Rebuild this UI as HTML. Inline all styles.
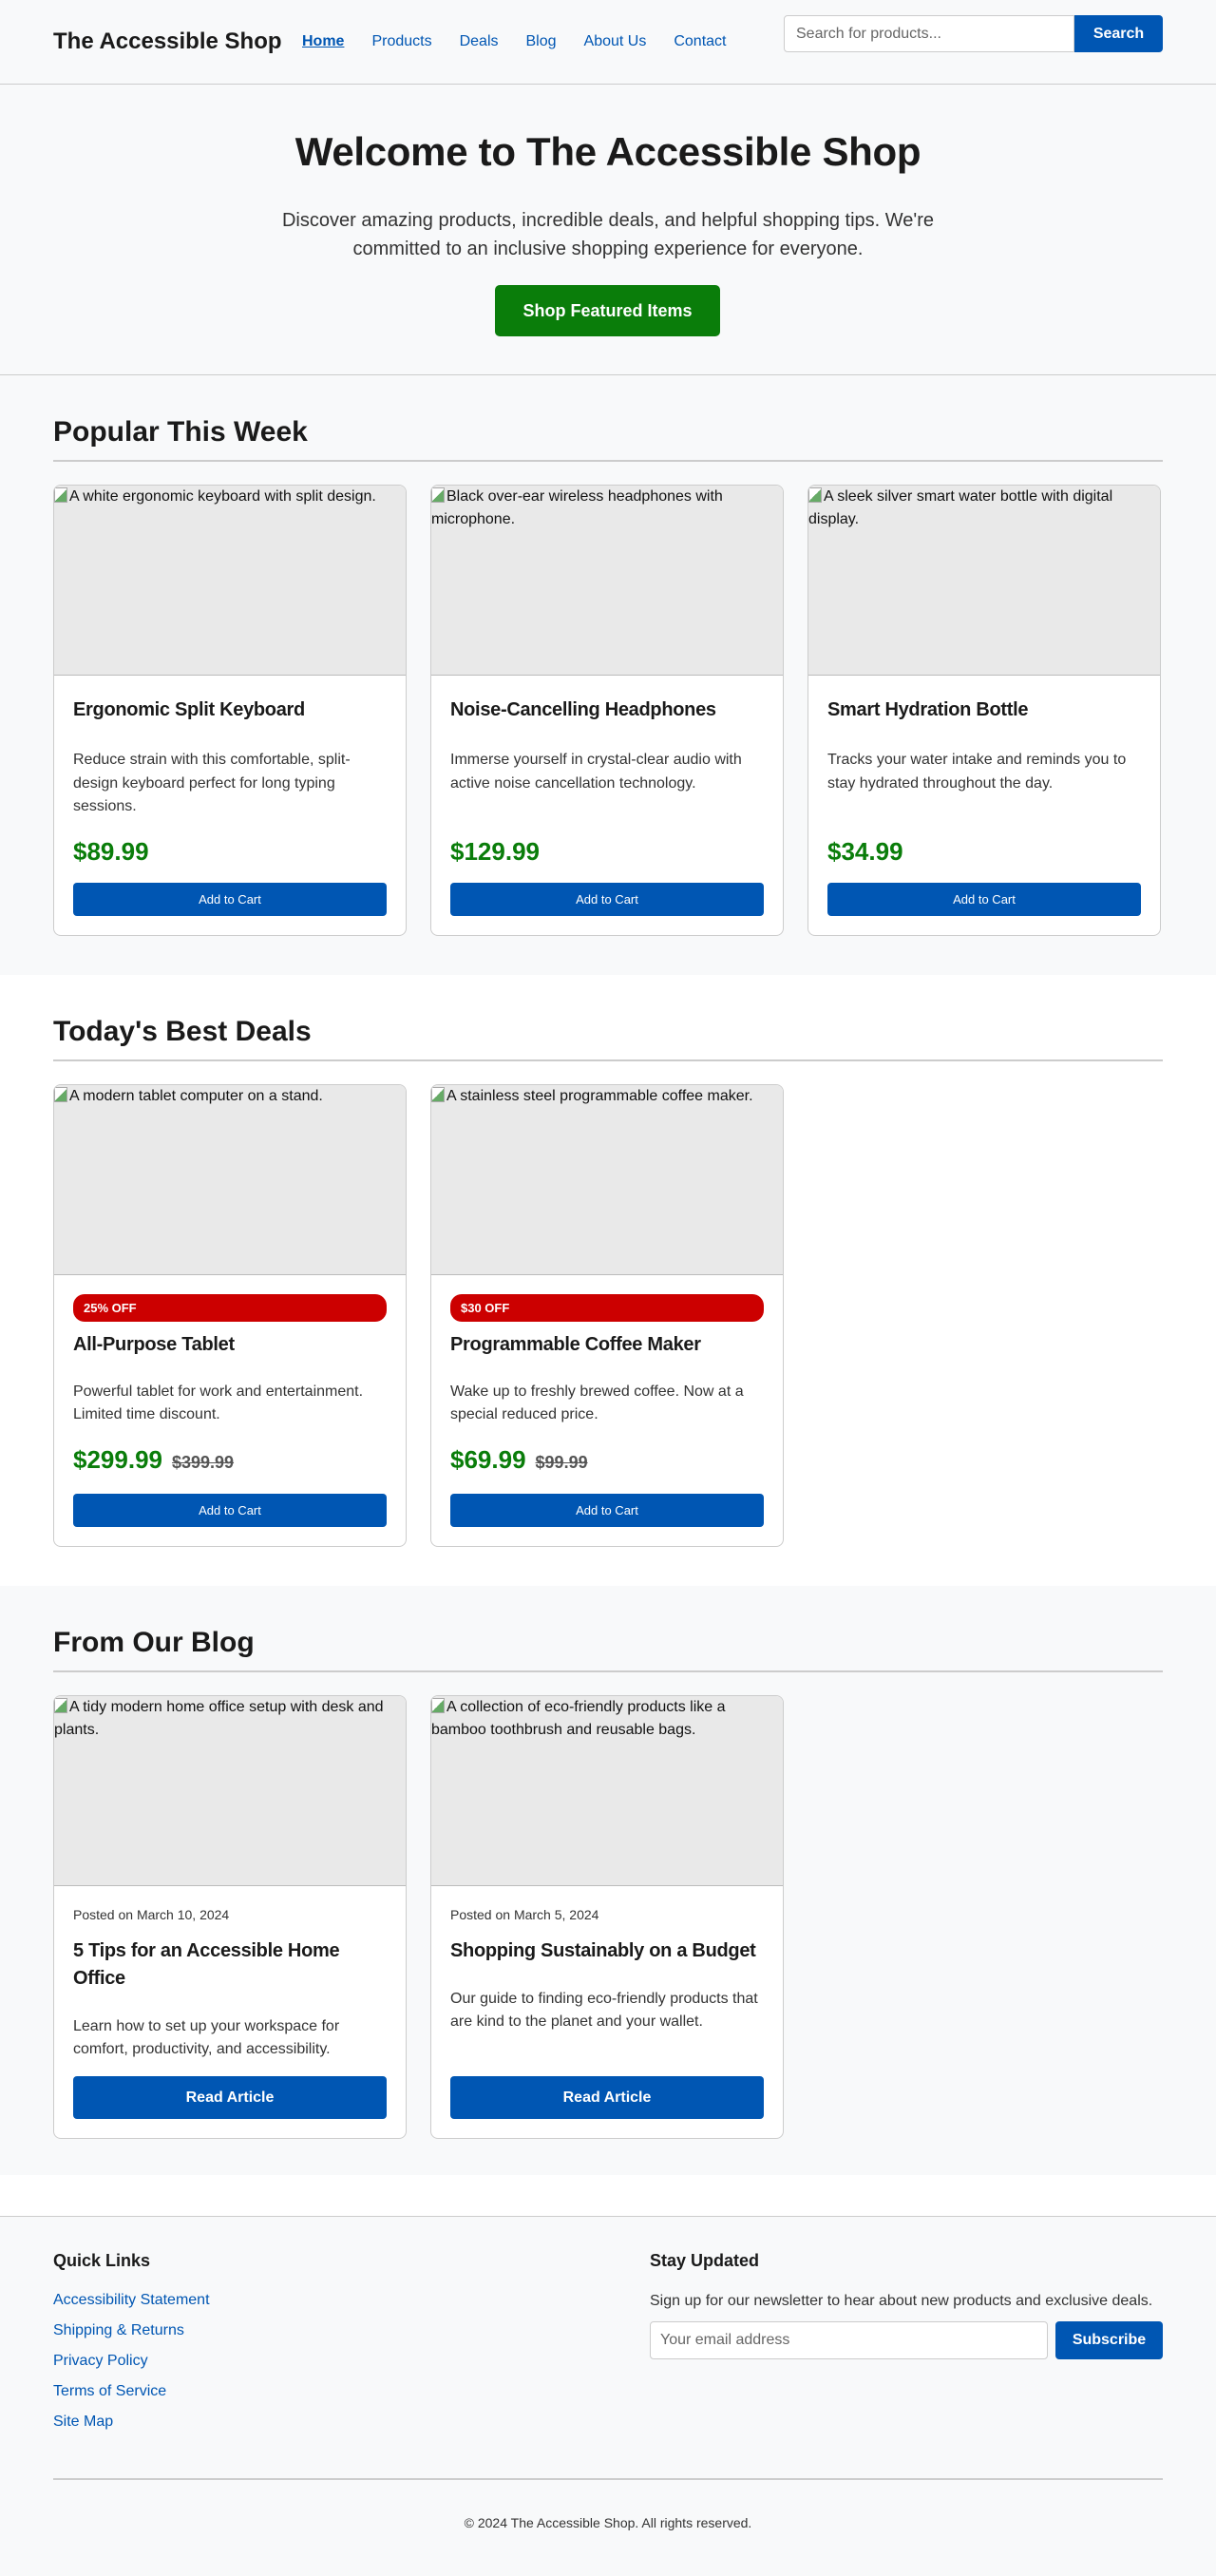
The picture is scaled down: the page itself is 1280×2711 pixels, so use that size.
<!DOCTYPE html>
<html><head><meta charset="utf-8"><style>
*{box-sizing:border-box;margin:0;padding:0}
body{width:1280px;font-family:"Liberation Sans",Arial,sans-serif;color:#1a1a1a;background:#fff}
a{color:#0056b3;text-decoration:none}
.wrap{width:1168px;margin:0 auto}
header{background:#f8f9fa;height:89px;border-bottom:1px solid #ccc;position:relative}
.logo{position:absolute;left:56px;top:29px;font-size:24px;font-weight:bold;line-height:30px}
nav{position:absolute;left:318px;top:34px;font-size:16px;line-height:20px}
nav a{margin-right:29px}
nav a.cur{font-weight:bold;text-decoration:underline}
.search{position:absolute;left:825px;top:16px;display:flex;height:39px}
.search input{width:306px;height:39px;border:1px solid #ccc;border-radius:4px 0 0 4px;padding:0 12px;font-size:16px;font-family:inherit;color:#666;background:#fff}
.search button{width:93px;background:#0056b3;color:#fff;border:0;border-radius:0 4px 4px 0;font-size:16px;font-weight:bold;font-family:inherit}
.hero{background:#f8f9fa;height:306px;border-bottom:1px solid #ccc;text-align:center;position:relative}
.hero h1{position:absolute;top:44px;left:0;right:0;font-size:42px;line-height:54px;letter-spacing:-0.3px}
.hero p{position:absolute;top:128px;left:290px;width:700px;font-size:20px;line-height:30px;color:#333}
.hero .btn{position:absolute;left:521px;top:211px;width:237px;height:54px;background:#0a7d0a;color:#fff;font-size:18px;font-weight:bold;line-height:54px;border-radius:5px}
section{padding:42px 0 41px}
section.light{background:#f8f9fa}
h2{font-size:30px;line-height:36px;padding-bottom:11px;border-bottom:2px solid #ccc;margin-bottom:24px}
.cards{display:flex;gap:25px;align-items:stretch}
.card{width:372px;border:1px solid #ccc;border-radius:8px;background:#fff;overflow:hidden;display:flex;flex-direction:column}
.img{height:200px;background:#e9e9e9;border-bottom:1px solid #bbb;font-size:16px;line-height:24px;color:#111}
.img i{display:inline-block;width:14px;height:16px;border:1px solid #aaa;vertical-align:-2px;background:linear-gradient(135deg,#fff 50%,#6a6 50%);margin-right:2px}
.body{padding:20px 20px 20px;display:flex;flex-direction:column;flex:1}
.body h3{font-size:20px;line-height:28px;margin-top:2px;letter-spacing:-0.3px}
.desc{font-size:16px;line-height:24.5px;color:#333;margin-top:27px;flex:1}
.price{font-size:26px;line-height:32px;font-weight:bold;color:#0a7d0a;margin-top:18px}
.price s{font-size:18px;color:#555;margin-left:10px}
.add{margin-top:17px;height:35px;background:#0056b3;color:#fff;border-radius:4px;text-align:center;font-size:13px;line-height:35px}
.badge{height:29px;background:#cc0000;color:#fff;font-size:13px;font-weight:bold;line-height:29px;padding-left:11px;border-radius:12px;margin-bottom:10px}
.deal h3{margin-top:0}
.deal .desc{margin-top:24px}
.posted{font-size:14px;line-height:20px;color:#333;margin-bottom:14px}
.blog h3{margin-top:0;line-height:29px}
.blog .desc{margin-top:24px}
.read{margin-top:15px;height:45px;background:#0056b3;color:#fff;border-radius:4px;text-align:center;font-size:16px;font-weight:bold;line-height:45px}
section.blogs{padding-bottom:38px}
footer{margin-top:43px;background:#f8f9fa;border-top:1px solid #ccc;height:379px;position:relative}
.fl{position:absolute;left:56px;top:34px}
.fl h4,.fr h4{font-size:18px;line-height:24px}
.fl a{display:block;font-size:16px;line-height:32px}
.fl h4{margin-bottom:14px}
.fr{position:absolute;left:684px;top:34px;width:540px}
.fr p{font-size:16px;line-height:24px;color:#333;margin-top:19px}
.fr .row{display:flex;margin-top:9px;gap:8px}
.fr input{width:419px;height:40px;border:1px solid #ccc;border-radius:4px;padding:0 10px;font-size:16px;font-family:inherit;color:#666;background:#fff}
.fr button{width:113px;height:40px;background:#0056b3;color:#fff;border:0;border-radius:4px;font-size:16px;font-weight:bold;font-family:inherit}
.hr{position:absolute;left:56px;width:1168px;top:275px;border-top:2px solid #ccc}
.copy{position:absolute;top:312px;left:0;right:0;text-align:center;font-size:14px;color:#333;line-height:20px}
</style></head><body>
<header>
<div class="logo">The Accessible Shop</div>
<nav><a class="cur">Home</a><a>Products</a><a>Deals</a><a>Blog</a><a>About Us</a><a>Contact</a></nav>
<div class="search"><input value="Search for products..."><button>Search</button></div>
</header>
<div class="hero">
<h1>Welcome to The Accessible Shop</h1>
<p>Discover amazing products, incredible deals, and helpful shopping tips. We're committed to an inclusive shopping experience for everyone.</p>
<a class="btn">Shop Featured Items</a>
</div>
<section class="light"><div class="wrap">
<h2>Popular This Week</h2>
<div class="cards">
<div class="card"><div class="img"><i></i>A white ergonomic keyboard with split design.</div><div class="body"><h3>Ergonomic Split Keyboard</h3><p class="desc">Reduce strain with this comfortable, split-design keyboard perfect for long typing sessions.</p><div class="price">$89.99</div><div class="add">Add to Cart</div></div></div>
<div class="card"><div class="img"><i></i>Black over-ear wireless headphones with microphone.</div><div class="body"><h3>Noise-Cancelling Headphones</h3><p class="desc">Immerse yourself in crystal-clear audio with active noise cancellation technology.</p><div class="price">$129.99</div><div class="add">Add to Cart</div></div></div>
<div class="card"><div class="img"><i></i>A sleek silver smart water bottle with digital display.</div><div class="body"><h3>Smart Hydration Bottle</h3><p class="desc">Tracks your water intake and reminds you to stay hydrated throughout the day.</p><div class="price">$34.99</div><div class="add">Add to Cart</div></div></div>
</div></div></section>
<section><div class="wrap">
<h2>Today's Best Deals</h2>
<div class="cards">
<div class="card deal"><div class="img"><i></i>A modern tablet computer on a stand.</div><div class="body"><div class="badge">25% OFF</div><h3>All-Purpose Tablet</h3><p class="desc">Powerful tablet for work and entertainment. Limited time discount.</p><div class="price">$299.99<s>$399.99</s></div><div class="add">Add to Cart</div></div></div>
<div class="card deal"><div class="img"><i></i>A stainless steel programmable coffee maker.</div><div class="body"><div class="badge">$30 OFF</div><h3>Programmable Coffee Maker</h3><p class="desc">Wake up to freshly brewed coffee. Now at a special reduced price.</p><div class="price">$69.99<s>$99.99</s></div><div class="add">Add to Cart</div></div></div>
</div></div></section>
<section class="light blogs"><div class="wrap">
<h2>From Our Blog</h2>
<div class="cards">
<div class="card blog"><div class="img"><i></i>A tidy modern home office setup with desk and plants.</div><div class="body"><div class="posted">Posted on March 10, 2024</div><h3>5 Tips for an Accessible Home Office</h3><p class="desc">Learn how to set up your workspace for comfort, productivity, and accessibility.</p><div class="read">Read Article</div></div></div>
<div class="card blog"><div class="img"><i></i>A collection of eco-friendly products like a bamboo toothbrush and reusable bags.</div><div class="body"><div class="posted">Posted on March 5, 2024</div><h3>Shopping Sustainably on a Budget</h3><p class="desc">Our guide to finding eco-friendly products that are kind to the planet and your wallet.</p><div class="read">Read Article</div></div></div>
</div></div></section>
<footer>
<div class="fl"><h4>Quick Links</h4><a>Accessibility Statement</a><a>Shipping &amp; Returns</a><a>Privacy Policy</a><a>Terms of Service</a><a>Site Map</a></div>
<div class="fr"><h4>Stay Updated</h4><p>Sign up for our newsletter to hear about new products and exclusive deals.</p><div class="row"><input value="Your email address"><button>Subscribe</button></div></div>
<div class="hr"></div>
<div class="copy">© 2024 The Accessible Shop. All rights reserved.</div>
</footer>
</body></html>
